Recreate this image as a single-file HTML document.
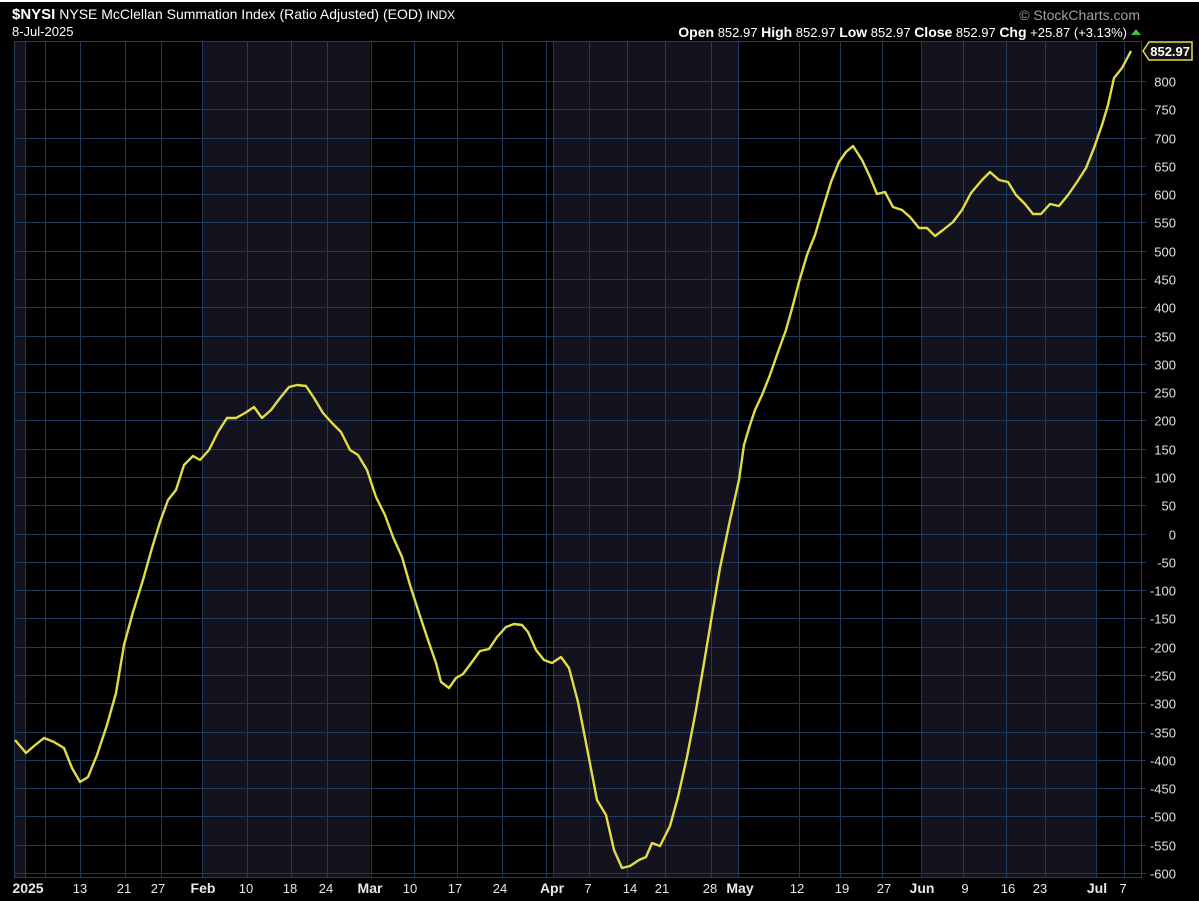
<!DOCTYPE html>
<html><head><meta charset="utf-8"><style>
html,body{margin:0;padding:0;background:#000;width:1199px;height:901px;overflow:hidden}
svg{display:block}
</style></head><body>
<svg width="1199" height="901" xmlns="http://www.w3.org/2000/svg" font-family="Liberation Sans, sans-serif">
<rect width="1199" height="901" fill="#000"/>
<rect width="1199" height="2" fill="#fff"/>
<g fill="#13131f">
<rect x="14" y="41" width="11" height="837"/>
<rect x="202" y="41" width="168" height="837"/>
<rect x="553" y="41" width="185" height="837"/>
<rect x="921" y="41" width="175" height="837"/>
</g>
<g id="grid" stroke="#213a5c" stroke-width="1"></g>
<rect x="14.5" y="41.5" width="1127" height="836" fill="none" stroke="#2a3c5c"/>
<g id="ylab" fill="#e0e0e0" font-size="13" text-anchor="end"></g>
<polyline fill="none" stroke="#e2dc46" stroke-width="2.4" stroke-linejoin="round" points="15,740 26,753 34,746 44,738 54,742 64,748 72,768 80,782 88,777 97,755 107,725 116,693 124,645 133,612 143,580 152,548 160,522 168,500 176,490 184,465 193,456 200,460 209,450 218,432 227,418 236,418 245,413 254,407 262,418 271,410 280,398 289,387 297,385 306,386 314,398 323,413 332,423 341,432 350,450 358,455 367,470 376,497 385,515 393,537 402,557 410,585 419,613 428,640 436,663 441,682 449,688 456,678 463,674 472,662 480,651 489,649 497,637 506,627 514,624 522,625 528,632 536,650 544,660 552,663 561,657 569,668 578,702 587,748 597,800 606,815 614,850 622,868 630,866 639,860 646,857 652,843 660,846 670,826 678,797 687,757 696,710 704,663 712,615 720,568 730,520 739,480 744,445 750,425 755,410 762,395 770,375 778,352 786,330 793,305 799,282 807,255 815,235 823,208 831,182 839,162 846,152 853,146 862,160 870,177 877,194 885,192 893,207 902,210 910,217 919,228 927,228 935,236 943,230 953,222 962,210 971,193 982,180 990,172 999,180 1008,182 1016,195 1025,204 1033,214 1041,214 1050,204 1059,206 1068,195 1077,182 1086,168 1094,148 1102,125 1108,105 1114,78 1122,68 1131,51"/>
<path d="M1143,51 L1149,42 H1192 V60 H1149 Z" fill="#111" stroke="#e2dc46" stroke-width="1.5"/>
<text x="1190" y="56" fill="#fff" font-size="13" font-weight="bold" text-anchor="end">852.97</text>
<text x="12" y="19" fill="#fff" font-size="14"><tspan font-weight="bold" font-size="15">$NYSI</tspan> NYSE McClellan Summation Index (Ratio Adjusted) (EOD) <tspan font-size="12">INDX</tspan></text>
<text x="12" y="36" fill="#fff" font-size="13">8-Jul-2025</text>
<text x="1140" y="20" fill="#a0a0a0" font-size="14" text-anchor="end">© StockCharts.com</text>
<text x="1127" y="37" fill="#fff" font-size="13" text-anchor="end"><tspan font-weight="bold" font-size="14">Open</tspan> 852.97 <tspan font-weight="bold" font-size="14">High</tspan> 852.97 <tspan font-weight="bold" font-size="14">Low</tspan> 852.97 <tspan font-weight="bold" font-size="14">Close</tspan> 852.97 <tspan font-weight="bold" font-size="14">Chg</tspan> +25.87 (+3.13%)</text>
<path d="M1131,35 L1136,29 L1141,35 Z" fill="#3cc03c"/>
<g fill="#e8e8e8" font-size="13" text-anchor="middle">
<text x="28" y="893" font-weight="bold" font-size="14">2025</text>
<text x="80" y="893">13</text><text x="124" y="893">21</text><text x="158" y="893">27</text>
<text x="203" y="893" font-weight="bold" font-size="14">Feb</text>
<text x="246" y="893">10</text><text x="290" y="893">18</text><text x="326" y="893">24</text>
<text x="370" y="893" font-weight="bold" font-size="14">Mar</text>
<text x="410" y="893">10</text><text x="455" y="893">17</text><text x="500" y="893">24</text>
<text x="552" y="893" font-weight="bold" font-size="14">Apr</text>
<text x="588" y="893">7</text><text x="630" y="893">14</text><text x="662" y="893">21</text><text x="710" y="893">28</text>
<text x="740" y="893" font-weight="bold" font-size="14">May</text>
<text x="797" y="893">12</text><text x="842" y="893">19</text><text x="884" y="893">27</text>
<text x="922" y="893" font-weight="bold" font-size="14">Jun</text>
<text x="965" y="893">9</text><text x="1008" y="893">16</text><text x="1040" y="893">23</text>
<text x="1097" y="893" font-weight="bold" font-size="14">Jul</text>
<text x="1123" y="893">7</text>
</g>
<script>
var ns="http://www.w3.org/2000/svg",g=document.getElementById("grid"),yl=document.getElementById("ylab");
function ln(x1,y1,x2,y2,p){var l=document.createElementNS(ns,"line");l.setAttribute("x1",x1);l.setAttribute("y1",y1);l.setAttribute("x2",x2);l.setAttribute("y2",y2);p.appendChild(l);}
[25,45,80,125,161,202,247,291,327,371,414,457,502,546,553,589,627,665,711,738,799,840,882,921,963,1006,1045,1096,1124].forEach(function(x){ln(x+.5,41,x+.5,878,g);});
for(var v=800;v>=-600;v-=50){var y=Math.round(81+(800-v)*0.5657)+.5;ln(14,y,1146,y,g);var t=document.createElementNS(ns,"text");t.setAttribute("x",1176);t.setAttribute("y",y+5);t.textContent=v;yl.appendChild(t);}
</script>
</svg>
</body></html>
